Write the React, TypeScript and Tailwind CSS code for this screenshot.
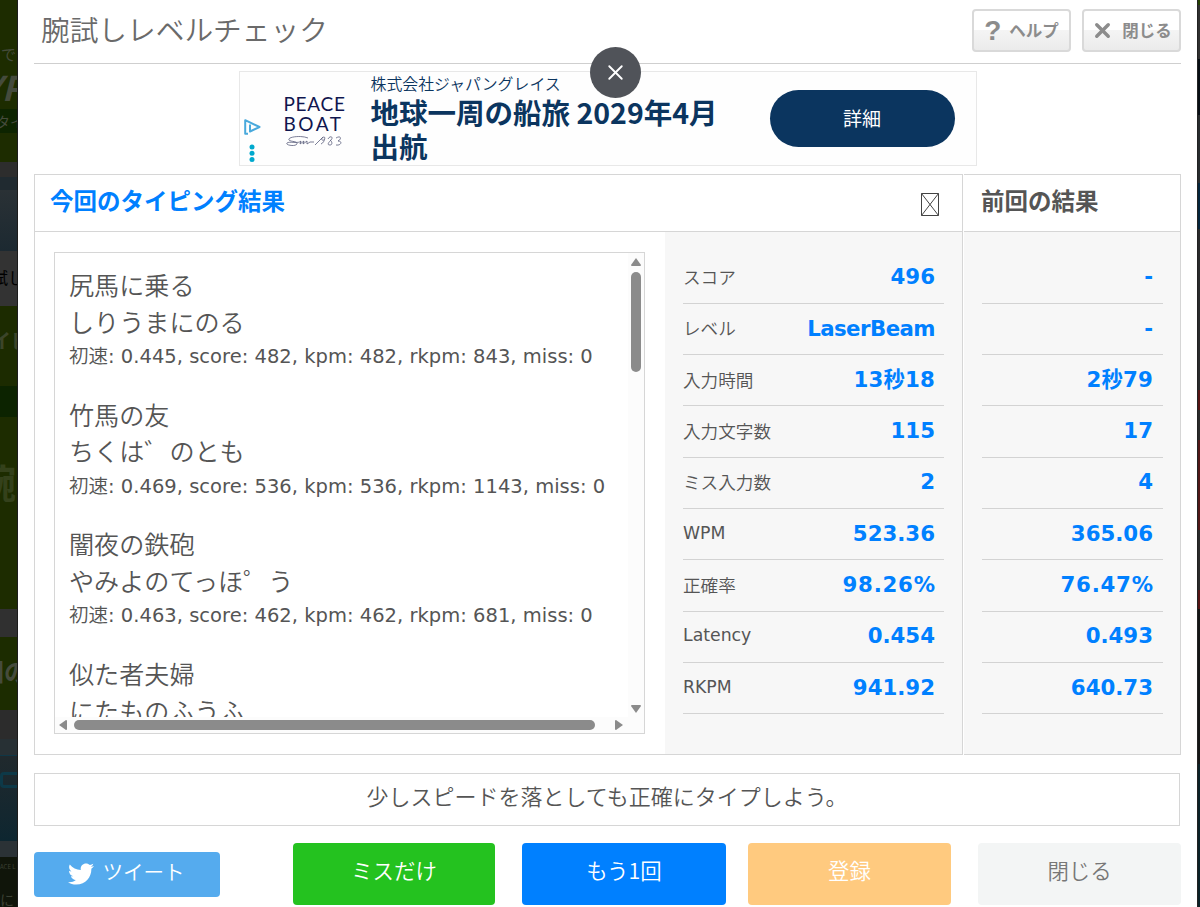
import React from 'react'
import clsx from 'clsx'
import { X } from 'lucide-react'
import { FaTwitter } from 'react-icons/fa'

interface Phrase {
  text: string
  kana: string
  info?: string
}

interface Stat {
  label: string
  current: string
  previous: string
}

const phrases: Phrase[] = [
  { text: '尻馬に乗る', kana: 'しりうまにのる', info: ': 0.445, score: 482, kpm: 482, rkpm: 843, miss: 0' },
  { text: '竹馬の友', kana: 'ちくは゛のとも', info: ': 0.469, score: 536, kpm: 536, rkpm: 1143, miss: 0' },
  { text: '闇夜の鉄砲', kana: 'やみよのてっほ゜う', info: ': 0.463, score: 462, kpm: 462, rkpm: 681, miss: 0' },
  { text: '似た者夫婦', kana: 'にたものふうふ' },
]

const stats: Stat[] = [
  { label: 'スコア', current: '496', previous: '-' },
  { label: 'レベル', current: 'LaserBeam', previous: '-' },
  { label: '入力時間', current: '13秒18', previous: '2秒79' },
  { label: '入力文字数', current: '115', previous: '17' },
  { label: 'ミス入力数', current: '2', previous: '4' },
  { label: 'WPM', current: '523.36', previous: '365.06' },
  { label: '正確率', current: '98.26%', previous: '76.47%' },
  { label: 'Latency', current: '0.454', previous: '0.493' },
  { label: 'RKPM', current: '941.92', previous: '640.73' },
]

// モーダルの後ろに見えるページの左端
const LeftEdge: React.FC = () => (
  <div className="flex w-[18px] shrink-0 flex-col overflow-hidden whitespace-nowrap border-r border-[#1c1c1c] bg-[#2e2e2e] font-bold text-[#454b3c]">
    <div className="h-[72px] bg-[#1d2c00] pt-[44px] text-[15px] leading-[20px]">
      <span className="ml-[1px] font-normal">で</span>
    </div>
    <div className="h-[37px] bg-[#1d2c00] text-[34px] italic leading-[30px]">
      <span className="-ml-[18px]">YP</span>
    </div>
    <div className="h-6 bg-[#0d2400] text-[14px] font-normal leading-6">
      <span className="-ml-[4px]">タイ</span>
    </div>
    <div className="h-[29px] bg-[#1d2c00]" />
    <div className="h-[15px] bg-[#2d2d2d]" />
    <div className="h-[13px] bg-[#202a30]" />
    <div className="h-[61px] bg-linear-to-b from-[#2a3135] to-[#1c2931]" />
    <div className="h-[55px] bg-[#333333] text-[16px] font-normal leading-[52px] text-black">
      <span className="-ml-[8px]">試し</span>
    </div>
    <div className="h-20 bg-[#1c2b00] text-[20px] leading-[70px] text-[#3c452a]">
      <span className="-ml-[9px]">イピ</span>
    </div>
    <div className="h-[31px] bg-[#0c2300]" />
    <div className="h-[192px] bg-[#1d2c00] text-[40px] leading-[128px] text-[#34411b]">
      <span className="-ml-[24px]">腕</span>
    </div>
    <div className="h-7 bg-[#303030]" />
    <div className="h-[73px] bg-[#1c2c00] text-[24px] leading-[68px]">
      <span className="-ml-[20px]">回の</span>
    </div>
    <div className="h-[29px] bg-[#2c2c2c]" />
    <div className="h-4 bg-[#273034]" />
    <div className="flex h-[86px] flex-col border-t border-[#103746] bg-linear-to-b from-[#20292d] to-[#0d2630] pt-[16px]">
      <div className="h-4 w-6 rounded-l border-[3px] border-[#0d3948]" />
    </div>
    <div className="h-4 bg-[#2b3236]" />
    <div className="flex flex-1 flex-col justify-between bg-[#10150a] font-normal text-[#3b4033]">
      <span className="text-[6px] leading-[20px]">ACE L</span>
      <span className="text-[14px] leading-[16px]">に</span>
    </div>
  </div>
)

const RightEdge: React.FC = () => (
  <div className="flex w-[3px] shrink-0 flex-col border-l border-[#222] bg-[#2c2d2d]">
    <div className="h-[5px] bg-[#234000]" />
    <div className="h-[54px] bg-[#303030]" />
    <div className="h-[56px] bg-[#080e15]" />
    <div className="h-[68px] bg-[#282c2e]" />
    <div className="h-[46px] bg-[#05263d]" />
    <div className="h-[161px] bg-[#292b2c]" />
    <div className="h-[20px] bg-[#551515]" />
    <div className="h-[30px] bg-[#2b2b2b]" />
    <div className="h-[90px] bg-[#511818]" />
    <div className="h-[60px] bg-[#2b2b2b]" />
    <div className="h-[19px] bg-[#541515]" />
    <div className="h-[155px] bg-[#151616]" />
    <div className="flex-1 bg-[#0b2228]" />
  </div>
)

const HeaderButton: React.FC<{ icon: React.ReactNode; label: string }> = ({ icon, label }) => (
  <button className="flex h-[43px] w-[99px] items-center justify-center gap-[9px] rounded-[4px] border-2 border-[#d9d9d9] bg-linear-to-b from-white from-50% via-[#f4f4f4] via-50% to-[#ebebeb] text-[16.5px] font-bold text-[#8c8c8c]">
    {icon}
    <span className="-ml-[1px]">{label}</span>
  </button>
)

const AdBanner: React.FC = () => (
  <div className="mx-auto mt-[7px] flex h-[95px] w-[738px] shrink-0 border border-[#e8e8e8] bg-[#fefefe] text-[#0b355f]">
    <div className="flex w-[34px] flex-col pl-[3px] pt-[46px]">
      <svg width="18" height="18" viewBox="0 0 18 18" fill="none" stroke="#49a9dc" strokeWidth="2" strokeLinejoin="round">
        <path d="M5 15.8H2.2V2.2L16.5 9 7 13.5V6.5" />
      </svg>
      <svg className="mt-[8px]" width="18" height="19" viewBox="0 0 18 19" fill="#00a9ce">
        <circle cx="9" cy="3" r="2.5" />
        <circle cx="9" cy="9.3" r="2.5" />
        <circle cx="9" cy="15.6" r="2.5" />
      </svg>
    </div>
    <div className="flex w-[97px] flex-col pl-[10px] pt-[22px] font-['Lato',sans-serif] text-[19px] leading-[20px] text-[#10164f]">
      <span className="tracking-[0.7px]">PEACE</span>
      <span className="tracking-[2.5px]">BOAT</span>
      <svg className="mt-[1px]" width="60" height="12" viewBox="0 0 60 12" fill="none" stroke="#5a5e7c" strokeWidth="0.8">
        <path d="M24 3C17 0 3 2 5 5c2 2 9 1 8 4-2 3-12 1-10-1s12 1 14-2l-1 3 4-3-1 3 4-3v3l3-2 4 0M31 10l8-8M37 9c3-1 5-7 3-7s-4 4 0 3M44 4c2-4 6-2 3 1s-4 5-1 5 2-4 0-5M52 3c5-3 6 1 2 3 5 0 3 5-2 4" />
      </svg>
    </div>
    <div className="w-[399px] pt-[2px]">
      <div className="text-[15.9px] font-[350] leading-[20px]">株式会社ジャパングレイス</div>
      <div className="mt-[1px] whitespace-nowrap text-[28.5px] font-bold leading-[34px]">
        地球一周の船旅 2029年4月
        <br />
        出航
      </div>
    </div>
    <button className="mt-[18px] h-[57px] w-[185px] rounded-full bg-[#0b355f] text-[19px] text-white">詳細</button>
  </div>
)

const PhraseList: React.FC = () => (
  <div className="flex h-[482px] w-[591px] flex-col border border-[#d6d6d6] bg-white text-[#555]">
    <div className="flex h-[464px]">
      <div className="h-full w-[573px] overflow-hidden whitespace-nowrap pl-[14px] pt-[13px]">
        {phrases.map((phrase) => (
          <div key={phrase.text} className="h-[129.7px]">
            <div className="h-[36.5px] text-[25.1px] font-[350] leading-[37px]">{phrase.text}</div>
            <div className="h-[36.5px] text-[25.1px] font-[350] leading-[36px]">{phrase.kana}</div>
            {phrase.info && (
              <div className="flex h-[32px] items-baseline text-[19.5px] leading-[32px]">
                <span className="font-[350]">初速</span>
                <span className="font-['DejaVu_Sans',sans-serif] tracking-[0.02px]">{phrase.info}</span>
              </div>
            )}
          </div>
        ))}
      </div>
      <div className="flex flex-1 flex-col items-center bg-[#fcfcfc] pb-[4px] pt-[5px]">
        <svg width="10" height="8" viewBox="0 0 10 8" fill="#8b8b8b"><path d="M5 0l5 7q0 1-1 1H1q-1 0-1-1z" /></svg>
        <div className="mt-[6px] h-[100px] w-[10px] rounded-full bg-[#8b8b8b]" />
        <svg className="mt-auto" width="10" height="8" viewBox="0 0 10 8" fill="#8b8b8b"><path d="M5 8l5-7q0-1-1-1H1q-1 0-1 1z" /></svg>
      </div>
    </div>
    <div className="flex flex-1 items-center bg-[#fcfcfc] pl-[4px]">
      <svg width="8" height="10" viewBox="0 0 8 10" fill="#8b8b8b"><path d="M0 5l7-5q1 0 1 1v8q0 1-1 1z" /></svg>
      <div className="ml-[7px] h-[10px] w-[521px] rounded-full bg-[#8b8b8b]" />
      <svg className="ml-[20px]" width="8" height="10" viewBox="0 0 8 10" fill="#8b8b8b"><path d="M8 5L1 0Q0 0 0 1v8q0 1 1 1z" /></svg>
    </div>
  </div>
)

const StatValue: React.FC<{ value: string }> = ({ value }) => (
  <span
    className={clsx(
      "font-['DejaVu_Sans','Noto_Sans_CJK_JP',sans-serif] text-[21.3px] font-bold text-[#0080ff]",
      value.includes('%') && 'tracking-[0.75px] -mr-[0.75px]',
      value === 'LaserBeam' && 'tracking-[-0.55px]',
      value.includes('秒') && 'tracking-[0.2px]'
    )}
  >
    {value}
  </span>
)

const App: React.FC = () => {
  return (
    <div className="flex h-[907px] w-[1200px] overflow-hidden bg-white font-['Noto_Sans_CJK_JP',sans-serif] text-[#555]">
      <LeftEdge />

      <main className="relative flex min-w-0 flex-1 flex-col px-4">
        {/* ヘッダー */}
        <header className="flex h-16 shrink-0 items-start border-b border-[#cfcfcf] pt-[9px]">
          <h1 className="pl-[7px] text-[28.7px] font-[350] leading-[40px] text-[#6a6a6a]">腕試しレベルチェック</h1>
          <div className="ml-auto flex gap-[11px]">
            <HeaderButton icon={<span className="font-['Liberation_Sans',sans-serif] text-[28px] leading-none">?</span>} label="ヘルプ" />
            <HeaderButton icon={<X size={23} strokeWidth={3.6} />} label="閉じる" />
          </div>
        </header>

        <AdBanner />
        <button className="absolute left-[572px] top-[47px] flex h-[51px] w-[51px] items-center justify-center rounded-full bg-[#505359]">
          <X size={25} strokeWidth={1.8} color="#fff" />
        </button>

        {/* 結果パネル */}
        <div className="mt-[8px] flex h-[581px] shrink-0 gap-[1px]">
          <section className="flex w-[929px] flex-col border border-[#d6d6d6]">
            <div className="flex h-[57px] shrink-0 items-center justify-between border-b border-[#d6d6d6] pl-[15px] pr-[23px]">
              <h2 className="pb-[5px] text-[23.5px] font-bold leading-none text-[#0080ff]">今回のタイピング結果</h2>
              <svg className="mt-[3px]" width="18" height="23" viewBox="0 0 18 23" fill="none" stroke="#444" strokeWidth="1">
                <path d="M.5.5h17v22H.5zL17.5 22.5M17.5.5L.5 22.5" />
              </svg>
            </div>
            <div className="flex flex-1">
              <div className="w-[630px] pl-[19px] pt-[20px]">
                <PhraseList />
              </div>
              <div className="flex-1 bg-[#f7f7f7] pl-[18px] pr-[18px] pt-[20.6px]">
                {stats.map((stat) => (
                  <div key={stat.label} className="flex h-[51.3px] items-center justify-between border-b border-[#d3d3d3] pr-[9px] pb-[1px]">
                    {/^[A-Za-z]+$/.test(stat.label) ? (
                      <span className="font-['DejaVu_Sans',sans-serif] text-[17.3px]">{stat.label}</span>
                    ) : (
                      <span className="text-[17.6px] font-[350]">{stat.label}</span>
                    )}
                    <StatValue value={stat.current} />
                  </div>
                ))}
              </div>
            </div>
          </section>

          <section className="flex flex-1 flex-col border-y border-r border-[#d6d6d6]">
            <div className="flex h-[57px] shrink-0 items-center border-b border-[#d6d6d6] pl-[17px]">
              <h2 className="pb-[5px] text-[23.5px] font-bold leading-none">前回の結果</h2>
            </div>
            <div className="flex-1 bg-[#f7f7f7] pl-[18px] pr-[17px] pt-[20.6px]">
              {stats.map((stat) => (
                <div key={stat.label} className="flex h-[51.3px] items-center justify-end border-b border-[#d3d3d3] pr-[10px] pb-[1px]">
                  <StatValue value={stat.previous} />
                </div>
              ))}
            </div>
          </section>
        </div>

        <p className="mr-[1px] mt-[18px] flex h-[53px] shrink-0 items-center justify-center border border-[#d6d6d6] pb-[8px] text-[22px] font-[350]">
          少しスピードを落としても正確にタイプしよう。
        </p>

        {/* 操作ボタン */}
        <div className="mt-[17px] flex h-[62px] shrink-0 items-center text-[21.4px] font-[350] text-white">
          <button className="flex h-[45px] w-[186px] items-center justify-center gap-[9px] rounded-[4px] bg-[#55abee] pr-[2px] text-[20.5px]">
            <FaTwitter size={26} />
            <span className="pb-[5px]">ツイート</span>
          </button>
          <button className="ml-[73px] h-full w-[202px] rounded-[4px] bg-[#24c21f] pb-[7px]">ミスだけ</button>
          <button className="ml-[27px] h-full w-[204px] rounded-[4px] bg-[#0080ff] pb-[7px]">もう1回</button>
          <button className="ml-[22px] h-full w-[203px] rounded-[4px] bg-[#ffca7f] pb-[7px]">登録</button>
          <button className="ml-[27px] h-full w-[203px] rounded-[4px] bg-[#f3f5f5] pb-[7px] text-[#777]">閉じる</button>
        </div>
      </main>

      <RightEdge />
    </div>
  )
}

export default App
